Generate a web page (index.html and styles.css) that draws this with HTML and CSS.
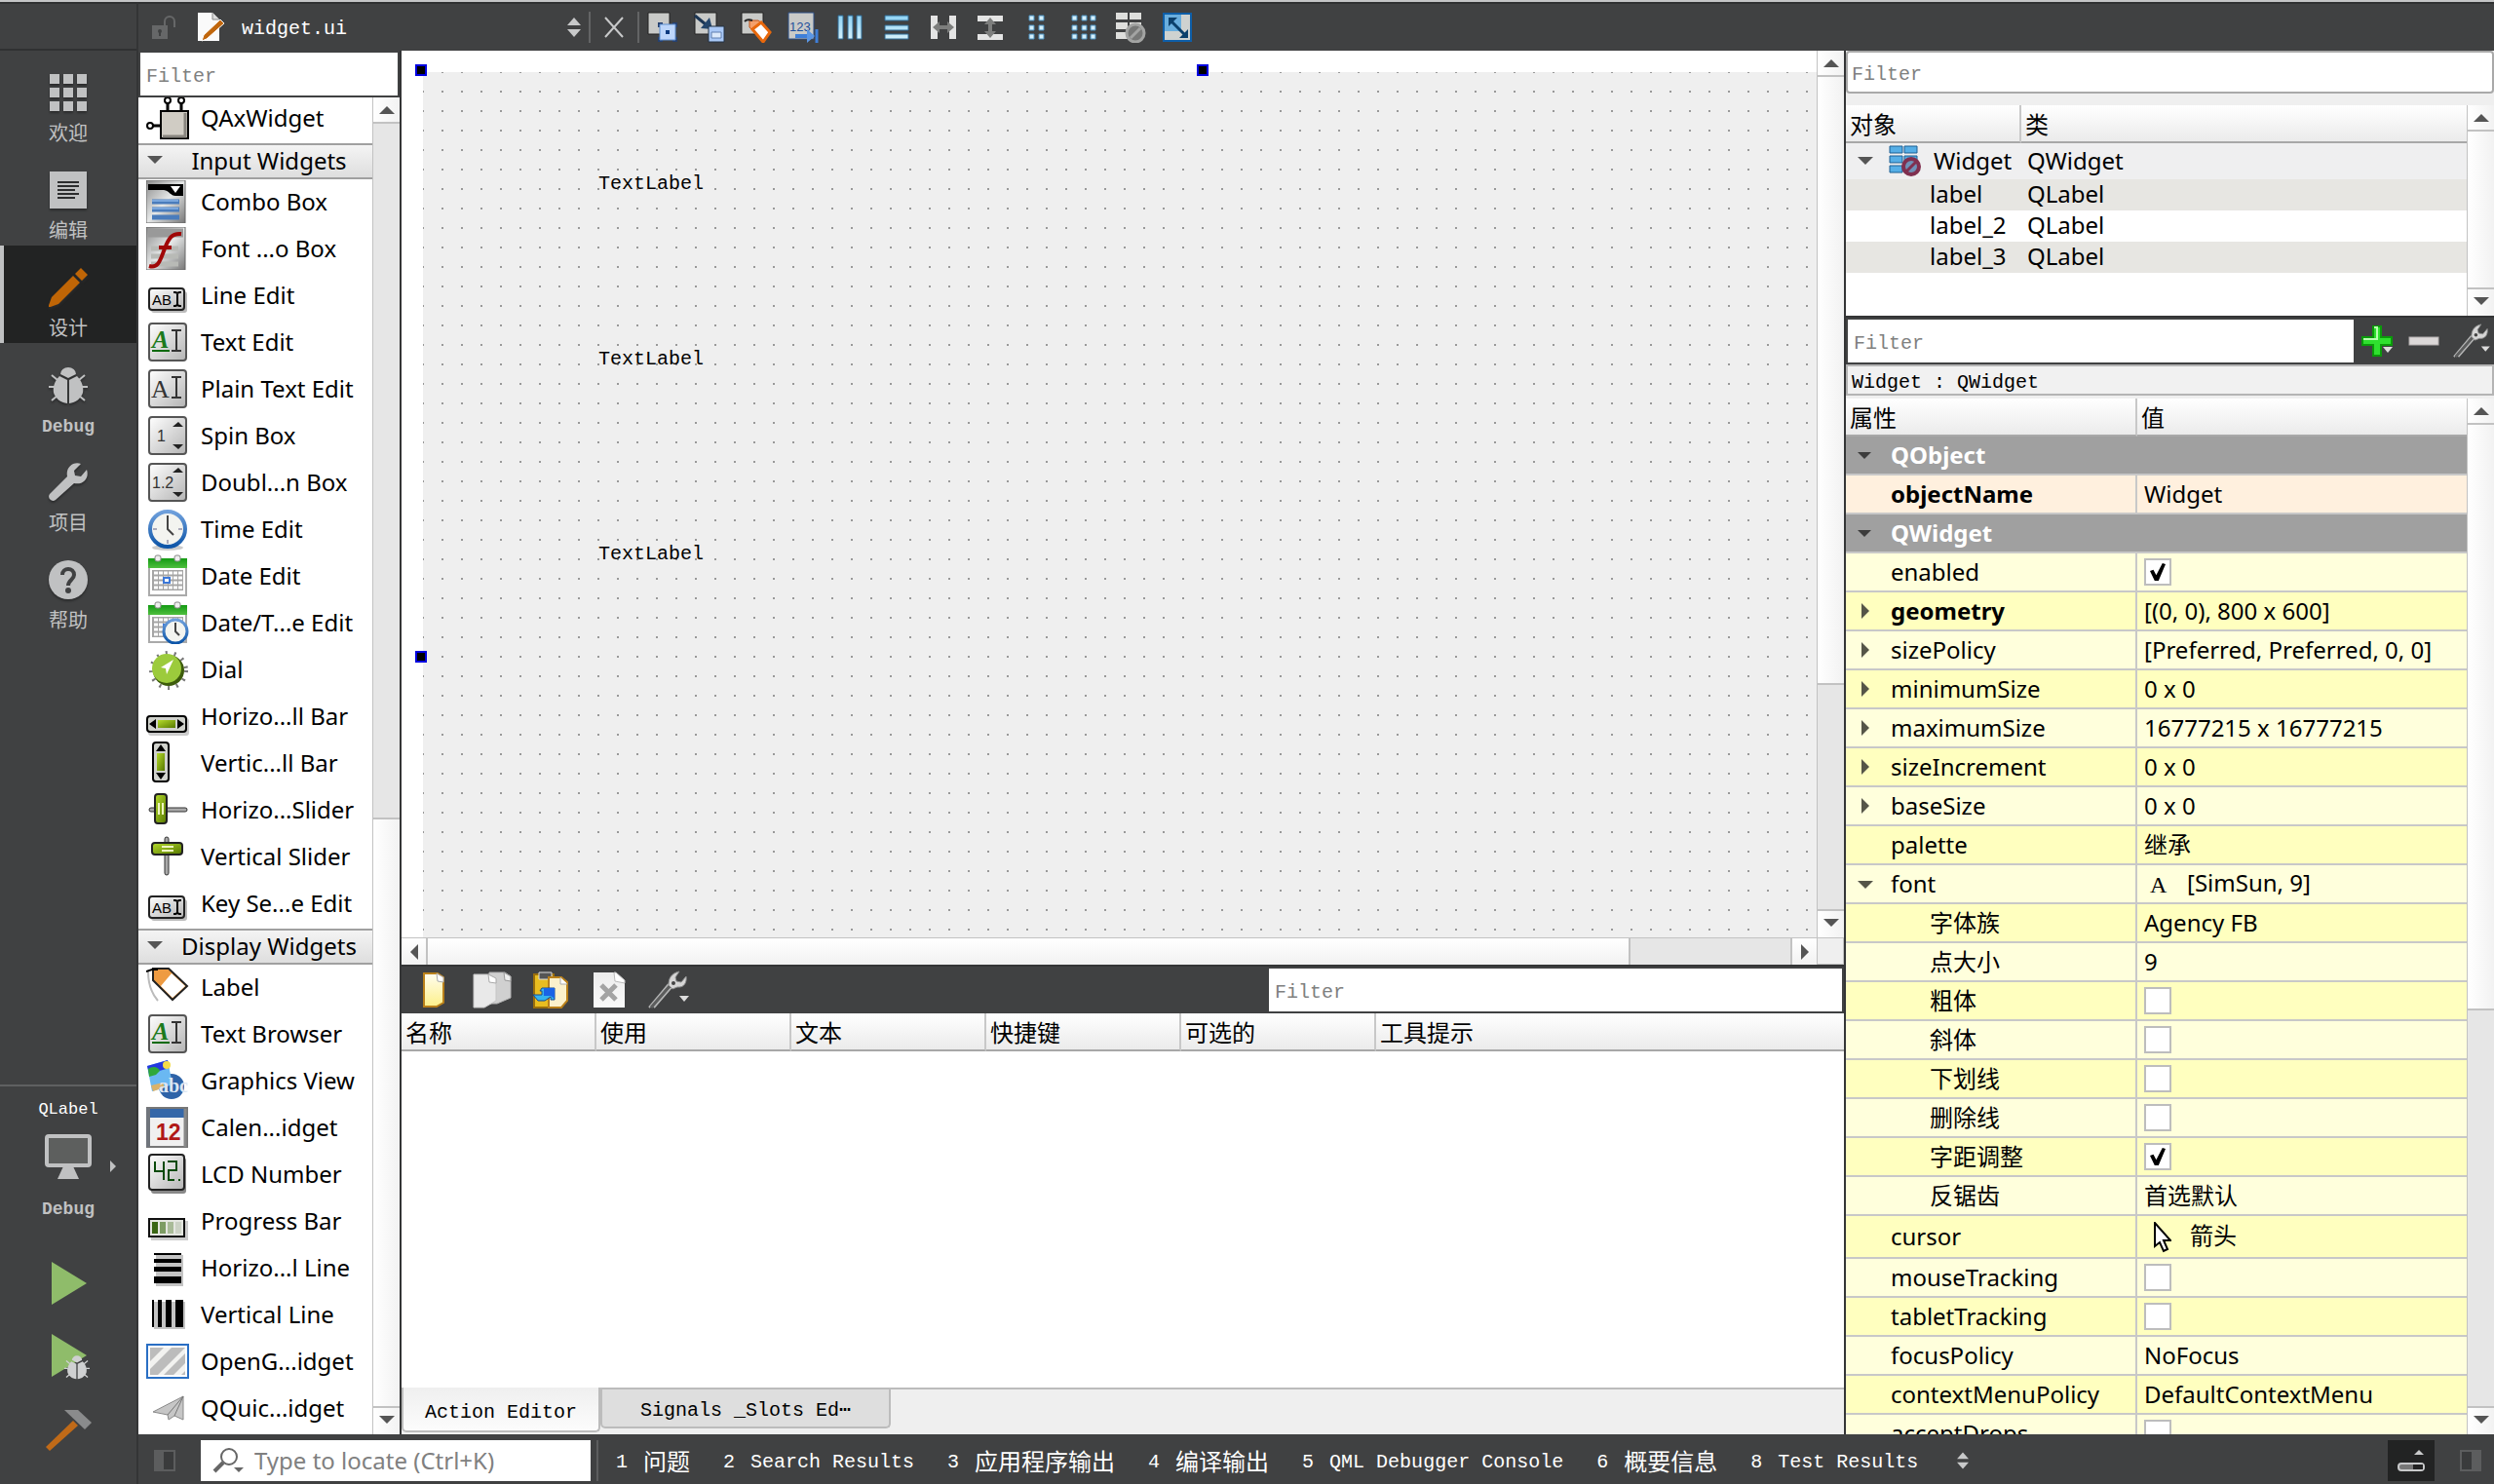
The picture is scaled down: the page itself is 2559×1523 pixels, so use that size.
FILE: index.html
```html
<!DOCTYPE html>
<html lang="zh-CN">
<head>
  <meta charset="UTF-8">
  <title>widget.ui - Qt Creator</title>
  <meta name="viewport" content="width=device-width,initial-scale=1.0">
  <link rel="stylesheet" href="styles.css">
</head>
<body class="page">

  <!-- icon sprite -->
  <svg class="sprite" width="0" height="0" aria-hidden="true">
    <defs>
      <linearGradient id="g-panel" x1="0" y1="0" x2="1" y2="1">
        <stop offset="0" stop-color="#fff"/><stop offset="1" stop-color="#b4b4b4"/>
      </linearGradient>
      <linearGradient id="g-grey" x1="0" y1="0" x2="1" y2="1">
        <stop offset="0" stop-color="#8a8a8a"/><stop offset=".5" stop-color="#e6e8e8"/><stop offset="1" stop-color="#777"/>
      </linearGradient>
      <linearGradient id="g-green" x1="0" y1="0" x2="1" y2="1">
        <stop offset="0" stop-color="#b6dc2c"/><stop offset="1" stop-color="#567800"/>
      </linearGradient>
      <linearGradient id="g-cal" x1="0" y1="0" x2="0" y2="1">
        <stop offset="0" stop-color="#139a13"/><stop offset="1" stop-color="#4fbf3f"/>
      </linearGradient>
      <linearGradient id="g-ring" x1="0" y1="0" x2="0" y2="1">
        <stop offset="0" stop-color="#6fa0dc"/><stop offset="1" stop-color="#0d55a8"/>
      </linearGradient>
      <linearGradient id="g-blue" x1="0" y1="0" x2="0" y2="1">
        <stop offset="0" stop-color="#8fd2f4"/><stop offset="1" stop-color="#d4f0fa"/>
      </linearGradient>
      <linearGradient id="g-sheet" x1="0" y1="0" x2="0" y2="1">
        <stop offset="0" stop-color="#fffdf0"/><stop offset="1" stop-color="#fdf08a"/>
      </linearGradient>
      <linearGradient id="g-page" x1="0" y1="0" x2="0" y2="1">
        <stop offset="0" stop-color="#ececec"/><stop offset="1" stop-color="#fafafa"/>
      </linearGradient>

      <symbol id="i-ax" viewBox="0 0 44 44">
        <path d="M22 4v12M36 4v12M6 30h10" stroke="#000" stroke-width="3"/>
        <g fill="#fff" stroke="#000" stroke-width="2"><circle cx="22" cy="4" r="3"/><circle cx="36" cy="4" r="3"/><circle cx="4" cy="30" r="3"/></g>
        <path d="M15 15h28v28h-28z" fill="#d0ccc4" stroke="#000" stroke-width="2"/>
        <path d="M40 17v24h-23" fill="none" stroke="#88857f" stroke-width="3"/>
      </symbol>
      <symbol id="i-combo" viewBox="0 0 44 44">
        <path d="M0 0h40v44h-40z" fill="url(#g-grey)" stroke="#666"/>
        <path d="M2 4h36v12h-8c-5 0-6-5-12-6h-16z" fill="#000"/>
        <path d="M25 6h10l-5 7z" fill="#fff"/>
        <path d="M6 22h28M6 30h28M6 38h28" stroke="#4a7cbc" stroke-width="5"/>
        <path d="M6 21h27M6 29h27" stroke="#7ba7dd" stroke-width="2"/>
      </symbol>
      <symbol id="i-font" viewBox="0 0 44 44">
        <path d="M0 0h40v44h-40z" fill="url(#g-grey)" stroke="#666"/>
        <path d="M2 6h36" stroke="#999" stroke-width="9"/>
        <path d="M5 22h28M5 30h28M5 38h28" stroke="#b8bab6" stroke-width="5"/>
        <path d="M3 40c10 3 12-8 16-18s7-16 17-15M13 21h13" fill="none" stroke="#a00808" stroke-width="4"/>
      </symbol>
      <symbol id="i-line" viewBox="0 0 44 44">
        <rect x="5" y="18" width="37" height="22" rx="3" fill="#bbb"/>
        <rect x="3" y="15" width="36" height="22" rx="3" fill="url(#g-panel)" stroke="#222" stroke-width="2"/>
        <text x="6" y="32" class="glyph glyph--abi">AB</text>
        <path d="M28 19h2l2 1 2-1h2M32 20v12M28 33h2l2-1 2 1h2" fill="none" stroke="#000" stroke-width="2"/>
      </symbol>
      <symbol id="i-rich" viewBox="0 0 44 44">
        <rect x="3" y="3" width="38" height="38" rx="3" fill="url(#g-panel)" stroke="#555" stroke-width="2"/>
        <text x="6" y="28" class="glyph glyph--green">A</text>
        <path d="M6 31h18" stroke="#0a6a0a" stroke-width="2"/>
        <path d="M26 10h10M26 31h10M31 10v21" stroke="#333" stroke-width="2"/>
      </symbol>
      <symbol id="i-plain" viewBox="0 0 44 44">
        <rect x="3" y="3" width="38" height="38" rx="3" fill="url(#g-panel)" stroke="#555" stroke-width="2"/>
        <text x="5" y="31" class="glyph">A</text>
        <path d="M26 10h10M26 31h10M31 10v21" stroke="#333" stroke-width="2"/>
      </symbol>
      <symbol id="i-spin" viewBox="0 0 44 44">
        <rect x="3" y="3" width="38" height="38" rx="3" fill="url(#g-panel)" stroke="#555" stroke-width="2"/>
        <text x="11" y="28" class="glyph glyph--small">1</text>
        <path d="M27 13h11l-5-5zM27 31h11l-5 5z" fill="#222"/>
      </symbol>
      <symbol id="i-dspin" viewBox="0 0 44 44">
        <rect x="3" y="3" width="38" height="38" rx="3" fill="url(#g-panel)" stroke="#555" stroke-width="2"/>
        <text x="6" y="28" class="glyph glyph--small">1.2</text>
        <path d="M27 12h11l-5-5zM27 32h11l-5 5z" fill="#222"/>
      </symbol>
      <symbol id="i-clock" viewBox="0 0 44 44">
        <ellipse cx="22" cy="41" rx="16" ry="3" fill="#ccc"/>
        <circle cx="22" cy="22" r="18" fill="#f3f4f0" stroke="url(#g-ring)" stroke-width="4"/>
        <path d="M22 8v14l6 6" fill="none" stroke="#444" stroke-width="2"/>
        <path d="M7 22h4M33 22h4M22 33v4" stroke="#aab" stroke-width="2"/>
      </symbol>
      <symbol id="i-date" viewBox="0 0 44 44">
        <path d="M3 5h38v37h-38z" fill="#fff" stroke="#aaa" stroke-width="2"/>
        <path d="M2 4h40v10h-40z" fill="url(#g-cal)"/>
        <rect x="9" y="1" width="6" height="6" rx="2" fill="#eee" stroke="#888"/>
        <rect x="29" y="1" width="6" height="6" rx="2" fill="#eee" stroke="#888"/>
        <path d="M6 16h32v21h-32z" fill="#a5a5a5"/>
        <path d="M8 19h29M8 24h29M8 29h29M8 34h29" stroke="#fff" stroke-width="3" stroke-dasharray="4 1"/>
        <path d="M18 24h6v5h-6z" fill="#fff" stroke="#3c78d8" stroke-width="2"/>
      </symbol>
      <symbol id="i-datetime" viewBox="0 0 44 44">
        <use href="#i-date"/>
        <circle cx="30" cy="31" r="12" fill="#f3f4f0" stroke="url(#g-ring)" stroke-width="3"/>
        <path d="M30 22v9l4 4" fill="none" stroke="#444" stroke-width="2"/>
      </symbol>
      <symbol id="i-dial" viewBox="0 0 44 44">
        <circle cx="23" cy="23" r="18" fill="none" stroke="#777" stroke-width="4" stroke-dasharray="2 7"/>
        <circle cx="23" cy="23" r="16" fill="#3d5c0c"/>
        <circle cx="21" cy="21" r="15" fill="#9ccb3c"/>
        <path d="M28 12l-13 8 5 1 1 6z" fill="#fff"/>
      </symbol>
      <symbol id="i-hbar" viewBox="0 0 44 44">
        <rect x="2" y="24" width="42" height="18" rx="3" fill="#ccc"/>
        <rect x="1" y="22" width="40" height="16" rx="3" fill="#d0d2cc" stroke="#000" stroke-width="2"/>
        <path d="M12 26h18v8h-18z" fill="url(#g-green)"/>
        <path d="M10 25v10l-7-5zM32 25v10l7-5z" fill="#000"/>
      </symbol>
      <symbol id="i-vbar" viewBox="0 0 44 44">
        <rect x="7" y="1" width="16" height="40" rx="3" fill="#d0d2cc" stroke="#000" stroke-width="2"/>
        <path d="M11 12h8v18h-8z" fill="url(#g-green)"/>
        <path d="M10 10h10l-5-7zM10 32h10l-5 7z" fill="#000"/>
      </symbol>
      <symbol id="i-hslider" viewBox="0 0 44 44">
        <rect x="3" y="20" width="39" height="4" rx="2" fill="#aaa" stroke="#333"/>
        <rect x="9" y="6" width="12" height="30" rx="3" fill="url(#g-green)" stroke="#222" stroke-width="2"/>
        <path d="M13 15v12M17 15v12" stroke="#eef5c0" stroke-width="2"/>
      </symbol>
      <symbol id="i-vslider" viewBox="0 0 44 44">
        <rect x="19" y="2" width="4" height="39" rx="2" fill="#aaa" stroke="#333"/>
        <rect x="6" y="8" width="31" height="12" rx="3" fill="url(#g-green)" stroke="#222" stroke-width="2"/>
        <path d="M16 12h12M16 16h12" stroke="#eef5c0" stroke-width="2"/>
      </symbol>
      <symbol id="i-label" viewBox="0 0 44 44">
        <path d="M2 6c0 12 3 22 10 30" fill="none" stroke="#bbb" stroke-width="2"/>
        <path d="M7 3h16l19 18-15 14-20-20z" fill="#ee9b42" stroke="#222" stroke-width="2"/>
        <path d="M26 8l14 13-13 12-12-12z" fill="#fff"/>
        <path d="M0 6l6-2h6" fill="none" stroke="#000" stroke-width="2"/>
      </symbol>
      <symbol id="i-graphics" viewBox="0 0 44 44">
        <circle cx="26" cy="28" r="13" fill="#2e63a8"/>
        <path d="M1 7l21-6 5 25-21 7z" fill="#6ab8f2"/>
        <path d="M1 7l21-6 2 8-21 6z" fill="#2438e0"/>
        <path d="M2 10c4-3 10-3 12 2l-4 4-7 2z" fill="#2fa83a"/>
        <circle cx="21" cy="6" r="4" fill="#f4dc4a"/>
        <path d="M5 27l12-3 2 5-12 4z" fill="#d9b26b"/>
        <text x="13" y="34" class="glyph glyph--abc">abc</text>
      </symbol>
      <symbol id="i-calendar" viewBox="0 0 44 44">
        <path d="M0 2h42v40h-42z" fill="#f0f0f0" stroke="#777" stroke-width="2"/>
        <path d="M0 2h4v40h-4z" fill="#70757c"/>
        <path d="M4 3h36v9h-36z" fill="#3567a8"/>
        <path d="M40 3v39" stroke="#888" stroke-width="3"/>
        <text x="10" y="35" class="glyph glyph--day">12</text>
      </symbol>
      <symbol id="i-lcd" viewBox="0 0 44 44">
        <rect x="5" y="5" width="36" height="37" rx="3" fill="#888"/>
        <rect x="3" y="2" width="36" height="36" rx="3" fill="url(#g-panel)" stroke="#222" stroke-width="2"/>
        <path d="M9 9v10h8M18 9v19M22 9h9v9h-8v10h6M33 28h2" fill="none" stroke="#0a4a0a" stroke-width="2"/>
      </symbol>
      <symbol id="i-progress" viewBox="0 0 44 44">
        <path d="M5 22h38v20h-38z" fill="#ccc"/>
        <path d="M3 20h36v18h-36z" fill="#e4e6e0" stroke="#111" stroke-width="2"/>
        <path d="M6 23h6v12h-6z" fill="#3a6614"/><path d="M14 23h6v12h-6z" fill="#7d9c63"/>
        <path d="M22 23h6v12h-6z" fill="#a9bb98"/><path d="M30 23h6v12h-6z" fill="#ccd2c5"/>
      </symbol>
      <symbol id="i-hline" viewBox="0 0 44 44">
        <path d="M10 9h28v32h-28z" fill="#c4c4c4"/>
        <path d="M8 7h28v2h-28zM8 13h28v4h-28zM8 21h28v5h-28zM8 31h28v7h-28z"/>
      </symbol>
      <symbol id="i-vline" viewBox="0 0 44 44">
        <path d="M8 9h32v28h-32z" fill="#c4c4c4"/>
        <path d="M6 7h2v28h-2zM12 7h4v28h-4zM20 7h6v28h-6zM30 7h8v28h-8z"/>
      </symbol>
      <symbol id="i-opengl" viewBox="0 0 44 44">
        <path d="M1 5h42v34h-42z" fill="#fff" stroke="#2a6fc4" stroke-width="2"/>
        <path d="M4 8h36v28h-36z" fill="#bcbcbc"/>
        <path d="M4 22l14-14h8l-22 22zM12 36l28-28v6l-22 22zM28 36l12-12v8l-4 4z" fill="#f2f2f0"/>
      </symbol>
      <symbol id="i-quick" viewBox="0 0 44 44">
        <path d="M7 26l31-16v24l-9-4-6 4-1-5z" fill="#c6c6c6" stroke="#8a8a8a"/>
        <path d="M38 10l-16 19M38 10l-9 20" stroke="#777"/>
      </symbol>

      <symbol id="i-up" viewBox="0 0 16 8"><path d="M0 8h16l-8-8z" fill="currentColor"/></symbol>
      <symbol id="i-down" viewBox="0 0 16 8"><path d="M0 0h16l-8 8z" fill="currentColor"/></symbol>
      <symbol id="i-left" viewBox="0 0 8 16"><path d="M8 0v16l-8-8z" fill="currentColor"/></symbol>
      <symbol id="i-right" viewBox="0 0 8 16"><path d="M0 0v16l8-8z" fill="currentColor"/></symbol>
      <symbol id="i-updown" viewBox="0 0 14 20"><path d="M0 8h14l-7-8zM0 12h14l-7 8z" fill="#c8c9ca"/></symbol>
      <symbol id="i-wrench" viewBox="0 0 44 40">
        <path d="M3 38l20-24M8 38l19-22" stroke="#b4b5b5" stroke-width="2"/>
        <path d="M5 38l20-23" stroke="#5c5d5d" stroke-width="3"/>
        <path d="M23 15c0-6 2-12 11-14l-4 6 1 4 5 1 5-6c1 6-2 12-9 11l-5 2z" fill="#d6d6d6" stroke="#8d8e8e"/>
        <circle cx="28" cy="13" r="2" fill="#444"/>
        <path d="M34 26h10l-5 6z" fill="#ddd"/>
      </symbol>
      <symbol id="i-bug" viewBox="0 0 40 40">
        <path d="M12 9a8 7 0 0 1 16 0l-8 4z"/>
        <path d="M19 15l-8-4c-5 5-7 11-6 17 2 6 7 10 14 11zM21 15l8-4c5 5 7 11 6 17-2 6-7 10-14 11z"/>
        <path d="M3 10l6 5M37 10l-6 5M0 22h6M40 22h-6M3 36l6-5M37 36l-6-5" stroke="currentColor" stroke-width="2"/>
      </symbol>
    </defs>
  </svg>

  <nav class="modes">
    <div class="modes__top"></div>
    <button class="mode" type="button">
      <svg class="mode__icon" viewBox="0 0 40 40"><path d="M1 1h10v10h-10zM15 1h10v10h-10zM29 1h10v10h-10zM1 15h10v10h-10zM15 15h10v10h-10zM29 15h10v10h-10zM1 29h10v10h-10zM15 29h10v10h-10zM29 29h10v10h-10z"/></svg>
      <span class="mode__label">欢迎</span>
    </button>
    <button class="mode" type="button">
      <svg class="mode__icon" viewBox="0 0 40 40"><path d="M1 1h38v38h-38z"/><path d="M9 12h22M9 16h22M9 20h18M9 24h22M9 28h18" stroke="#2c2d2e" stroke-width="2"/></svg>
      <span class="mode__label">编辑</span>
    </button>
    <button class="mode mode--active" type="button">
      <svg class="mode__icon" viewBox="0 0 40 40"><path d="M33 0l7 7-6 6-7-7zM25 8l7 7-22 22-11 4 4-11z" fill="#bf6506"/></svg>
      <span class="mode__label">设计</span>
    </button>
    <button class="mode" type="button">
      <svg class="mode__icon"><use href="#i-bug"/></svg>
      <span class="mode__label mode__label--latin">Debug</span>
    </button>
    <button class="mode" type="button">
      <svg class="mode__icon" viewBox="0 0 40 40"><path d="M33 1l-7 7 1 5 6 1 6-7c3 9-4 16-13 14l-19 17c-4 3-9-2-6-6l18-18c-2-9 6-16 14-13z"/></svg>
      <span class="mode__label">项目</span>
    </button>
    <button class="mode" type="button">
      <svg class="mode__icon" viewBox="0 0 40 40"><circle cx="20" cy="20" r="20"/><path d="M14 15c0-8 12-8 12 0 0 5-6 5-6 11" fill="none" stroke="#404142" stroke-width="4"/><circle cx="20" cy="31" r="3" fill="#404142"/></svg>
      <span class="mode__label">帮助</span>
    </button>

    <div class="kit">
      <button class="kit__selector" type="button">
        <span class="kit__project">QLabel</span>
        <svg class="kit__monitor" viewBox="0 0 48 48"><rect x="2" y="2" width="44" height="30" rx="2" fill="#5d5f5e" stroke="#c0c1c2" stroke-width="4"/><path d="M19 33h10l6 13h-22z" fill="#c0c1c2"/></svg>
        <svg class="kit__arrow" width="6" height="12"><use href="#i-right"/></svg>
        <span class="mode__label mode__label--latin">Debug</span>
      </button>
      <button class="kit__run" type="button" aria-label="Run"><svg width="48" height="48" viewBox="0 0 48 48"><path d="M7 2l36 22-36 22z" fill="#8fbc6a"/></svg></button>
      <button class="kit__run" type="button" aria-label="Debug run"><svg width="48" height="48" viewBox="0 0 48 48"><path d="M7 0l36 22-36 22z" fill="#8fbc6a"/><svg x="19" y="21" width="28" height="26" color="#cfd0d1" fill="#cfd0d1"><use href="#i-bug"/></svg></svg></button>
      <button class="kit__run" type="button" aria-label="Build"><svg width="48" height="48" viewBox="0 0 48 48"><path d="M29 13l5 5-29 26-4-4z" fill="#c06a18"/><path d="M20 2h14l14 13-7 7z" fill="#8a8b8c"/></svg></button>
    </div>
  </nav>

  <div class="main">
    <header class="toolbar">
      <button class="toolbar__btn" type="button" aria-label="Lock"><svg width="24" height="24" viewBox="0 0 24 24"><path d="M0 10h16v14h-16z" fill="#666768"/><path d="M13 11v-5a5 5 0 0 1 10 0v6" fill="none" stroke="#666768" stroke-width="2"/><circle cx="8" cy="16" r="2" fill="#404142"/><path d="M7 16h2v5h-2z" fill="#404142"/></svg></button>
      <div class="toolbar__file">
        <svg width="32" height="32" viewBox="0 0 32 32"><path d="M3 1h15l7 7v22h-22z" fill="#fafafa"/><path d="M18 1v7h7" fill="#ddd" stroke="#888"/><path d="M26 8l4 4-18 16-5 2 2-6z" fill="#c0660c" stroke="#fff"/></svg>
        <select class="toolbar__select" aria-label="Open document"><option>widget.ui</option></select>
        <svg width="14" height="20"><use href="#i-updown"/></svg>
      </div>
      <span class="toolbar__sep"></span>
      <button class="toolbar__btn" type="button" aria-label="Close"><svg width="22" height="22" viewBox="0 0 22 22"><path d="M2 1l18 20M20 1l-18 20" stroke="#c8c9ca" stroke-width="2"/></svg></button>
      <span class="toolbar__sep"></span>
      <div class="toolbar__tools">
        <button class="toolbar__btn" type="button" aria-label="Edit widgets"><svg width="32" height="32" viewBox="0 0 32 32"><path d="M1 1h22v22h-22z" fill="#c9cac8" stroke="#222"/><path d="M11 11h5v5h-5zM26 11h5v5h-5zM11 26h5v5h-5zM26 26h5v5h-5z" fill="#26406e"/><path d="M13 13h16v16h-16z" fill="#bdd6fb" stroke="#5f8fd0"/><path d="M19 19h4v4h-4z" fill="#0b3a80"/></svg></button>
        <button class="toolbar__btn" type="button" aria-label="Edit signals"><svg width="32" height="32" viewBox="0 0 32 32"><path d="M1 1h22v22h-22z" fill="#c9cac8" stroke="#222"/><path d="M1 4l11 9" stroke="#1c3654" stroke-width="3"/><path d="M16 6l3 12-12-1z" fill="#24466c"/><path d="M15 15h16v16h-16z" fill="#a9c8f6" stroke="#234"/><path d="M18 21h10v6h-10z" fill="#dbe9fb" stroke="#5f7fb0"/></svg></button>
        <button class="toolbar__btn" type="button" aria-label="Edit buddies"><svg width="32" height="32" viewBox="0 0 32 32"><path d="M1 1h22v22h-22z" fill="#c9cac8" stroke="#222"/><path d="M9 9h9l4 3-8 9-5-5z" fill="#f3a06c" stroke="#c0561c"/><path d="M21 11l9 10-7 10-11-13z" fill="#fff" stroke="#e8680c" stroke-width="3"/><path d="M4 10c2-2 5-2 8-1" fill="none" stroke="#222" stroke-width="2"/></svg></button>
        <button class="toolbar__btn" type="button" aria-label="Edit tab order"><svg width="32" height="32" viewBox="0 0 32 32"><path d="M1 1h26v27h-26z" fill="#c9cac8" stroke="#2c4f84"/><text x="2" y="20" class="glyph glyph--order">123</text><path d="M8 25h14" stroke="#3f7fd8" stroke-width="4"/><path d="M20 18l8 7-8 7z" fill="#5b96e4"/><path d="M30 18v14" stroke="#3f7fd8" stroke-width="3"/></svg></button>
        <button class="toolbar__btn" type="button" aria-label="Lay out horizontally"><svg width="32" height="32" viewBox="0 0 32 32"><path d="M4 4h5v24h-5zM14 4h5v24h-5zM23 4h5v24h-5z" fill="url(#g-blue)" stroke="#2f6a94"/></svg></button>
        <button class="toolbar__btn" type="button" aria-label="Lay out vertically"><svg width="32" height="32" viewBox="0 0 32 32"><path d="M4 4h24v5h-24zM4 14h24v5h-24zM4 23h24v5h-24z" fill="url(#g-blue)" stroke="#2f6a94"/></svg></button>
        <button class="toolbar__btn" type="button" aria-label="Horizontal splitter"><svg width="32" height="32" viewBox="0 0 32 32"><path d="M3 4h7v24h-7zM22 4h7v24h-7z" fill="#e4e4e4"/><path d="M5 16l7-6v4h8v-4l7 6-7 6v-4h-8v4z" fill="#7d7e7d"/></svg></button>
        <button class="toolbar__btn" type="button" aria-label="Vertical splitter"><svg width="32" height="32" viewBox="0 0 32 32"><path d="M3 4h26v6h-26zM3 23h26v6h-26z" fill="#e4e4e4"/><path d="M16 6l6 7h-4v7h4l-6 7-6-7h4v-7h-4z" fill="#7d7e7d"/></svg></button>
        <button class="toolbar__btn" type="button" aria-label="Form layout"><svg width="32" height="32" viewBox="0 0 32 32"><path d="M8 4h5v5h-5zM18 4h5v5h-5zM8 14h5v5h-5zM18 14h5v5h-5zM8 23h5v5h-5zM18 23h5v5h-5z" fill="#d4effb" stroke="#4a90bf"/></svg></button>
        <button class="toolbar__btn" type="button" aria-label="Grid layout"><svg width="32" height="32" viewBox="0 0 32 32"><path d="M4 4h5v5h-5zM14 4h5v5h-5zM23 4h5v5h-5zM4 14h5v5h-5zM14 14h5v5h-5zM23 14h5v5h-5zM4 23h5v5h-5zM14 23h5v5h-5zM23 23h5v5h-5z" fill="#d4effb" stroke="#4a90bf"/></svg></button>
        <button class="toolbar__btn" type="button" aria-label="Break layout"><svg width="32" height="32" viewBox="0 0 32 32"><path d="M1 1h12v7h-12zM15 1h12v7h-12zM1 11h12v7h-12zM15 11h12v7h-12zM1 21h12v7h-12z" fill="#dededc"/><circle cx="21" cy="22" r="9" fill="#777877" stroke="#a3a4a3" stroke-width="3"/><path d="M16 27l10-10" stroke="#a3a4a3" stroke-width="3"/></svg></button>
        <button class="toolbar__btn" type="button" aria-label="Adjust size"><svg width="32" height="32" viewBox="0 0 32 32"><path d="M2 2h28v28h-28z" fill="#cfd2d0" stroke="#0e5ea8" stroke-width="2"/><path d="M3 3h17v17h-17z" fill="#6aaede"/><path d="M10 10l14 14" stroke="#0b3f6b" stroke-width="3"/><path d="M7 6h9l-9 9zM27 27h-9l9-9z" fill="#0b3f6b"/></svg></button>
      </div>
    </header>

    <div class="workspace">
      <aside class="palette">
        <div class="palette__filter"><input class="field" type="text" placeholder="Filter" aria-label="Filter widgets"></div>
        <div class="palette__body">
          <div class="palette__list">
            <ul class="items"><li class="item"><svg class="item__icon"><use href="#i-ax"/></svg>QAxWidget</li></ul>
            <h2 class="group"><svg class="group__arrow" width="16" height="8"><use href="#i-down"/></svg>Input Widgets</h2>
            <ul class="items">
              <li class="item"><svg class="item__icon"><use href="#i-combo"/></svg>Combo Box</li>
              <li class="item"><svg class="item__icon"><use href="#i-font"/></svg>Font ...o Box</li>
              <li class="item"><svg class="item__icon"><use href="#i-line"/></svg>Line Edit</li>
              <li class="item"><svg class="item__icon"><use href="#i-rich"/></svg>Text Edit</li>
              <li class="item"><svg class="item__icon"><use href="#i-plain"/></svg>Plain Text Edit</li>
              <li class="item"><svg class="item__icon"><use href="#i-spin"/></svg>Spin Box</li>
              <li class="item"><svg class="item__icon"><use href="#i-dspin"/></svg>Doubl...n Box</li>
              <li class="item"><svg class="item__icon"><use href="#i-clock"/></svg>Time Edit</li>
              <li class="item"><svg class="item__icon"><use href="#i-date"/></svg>Date Edit</li>
              <li class="item"><svg class="item__icon"><use href="#i-datetime"/></svg>Date/T...e Edit</li>
              <li class="item"><svg class="item__icon"><use href="#i-dial"/></svg>Dial</li>
              <li class="item"><svg class="item__icon"><use href="#i-hbar"/></svg>Horizo...ll Bar</li>
              <li class="item"><svg class="item__icon"><use href="#i-vbar"/></svg>Vertic...ll Bar</li>
              <li class="item"><svg class="item__icon"><use href="#i-hslider"/></svg>Horizo...Slider</li>
              <li class="item"><svg class="item__icon"><use href="#i-vslider"/></svg>Vertical Slider</li>
              <li class="item"><svg class="item__icon"><use href="#i-line"/></svg>Key Se...e Edit</li>
            </ul>
            <h2 class="group"><svg class="group__arrow" width="16" height="8"><use href="#i-down"/></svg>Display Widgets</h2>
            <ul class="items">
              <li class="item"><svg class="item__icon"><use href="#i-label"/></svg>Label</li>
              <li class="item"><svg class="item__icon"><use href="#i-rich"/></svg>Text Browser</li>
              <li class="item"><svg class="item__icon"><use href="#i-graphics"/></svg>Graphics View</li>
              <li class="item"><svg class="item__icon"><use href="#i-calendar"/></svg>Calen...idget</li>
              <li class="item"><svg class="item__icon"><use href="#i-lcd"/></svg>LCD Number</li>
              <li class="item"><svg class="item__icon"><use href="#i-progress"/></svg>Progress Bar</li>
              <li class="item"><svg class="item__icon"><use href="#i-hline"/></svg>Horizo...l Line</li>
              <li class="item"><svg class="item__icon"><use href="#i-vline"/></svg>Vertical Line</li>
              <li class="item"><svg class="item__icon"><use href="#i-opengl"/></svg>OpenG...idget</li>
              <li class="item"><svg class="item__icon"><use href="#i-quick"/></svg>QQuic...idget</li>
            </ul>
          </div>
          <div class="scroll">
            <span class="scroll__btn"><svg width="16" height="8"><use href="#i-up"/></svg></span>
            <span class="scroll__groove" style="flex-grow: 714"></span>
            <span class="scroll__thumb" style="flex-grow: 603"></span>
            <span class="scroll__btn scroll__btn--end"><svg width="16" height="8"><use href="#i-down"/></svg></span>
          </div>
        </div>
      </aside>

      <div class="center">
        <section class="editor">
          <div class="editor__view">
            <div class="form">
              <span class="form__handle form__handle--tl"></span>
              <span class="form__handle form__handle--t"></span>
              <span class="form__handle form__handle--l"></span>
              <span class="form__label form__label--1">TextLabel</span>
              <span class="form__label form__label--2">TextLabel</span>
              <span class="form__label form__label--3">TextLabel</span>
            </div>
          </div>
          <div class="scroll">
            <span class="scroll__btn"><svg width="16" height="8"><use href="#i-up"/></svg></span>
            <span class="scroll__thumb" style="flex-grow: 626"></span>
            <span class="scroll__groove" style="flex-grow: 231"></span>
            <span class="scroll__btn scroll__btn--end"><svg width="16" height="8"><use href="#i-down"/></svg></span>
          </div>
          <div class="scroll scroll--horizontal">
            <span class="scroll__btn"><svg width="8" height="16"><use href="#i-left"/></svg></span>
            <span class="scroll__thumb" style="flex-grow: 1234"></span>
            <span class="scroll__groove" style="flex-grow: 164"></span>
            <span class="scroll__btn scroll__btn--end"><svg width="8" height="16"><use href="#i-right"/></svg></span>
          </div>
          <div class="editor__corner"></div>
        </section>

        <section class="actions">
          <div class="actions__bar">
            <button class="actions__btn" type="button" aria-label="New action"><svg width="40" height="40" viewBox="0 0 40 40"><path d="M10 3h14l6 4v26l-7 4h-13z" fill="url(#g-sheet)" stroke="#b9801a" stroke-width="2"/><path d="M23 3l1 8 6 1v-5z" fill="#fff" stroke="#aaa"/></svg></button>
            <button class="actions__btn" type="button" aria-label="Copy"><svg width="40" height="40" viewBox="0 0 40 40"><path d="M17 2h16l6 4v22l-14 6h-8z" fill="#d0d0d0" stroke="#b0b0b0"/><path d="M32 2l1 8 6 1v-5z" fill="#eee" stroke="#999"/><path d="M1 4h17l6 5v22l-12 7h-11z" fill="#e9e9e9" stroke="#c6c6c6"/><path d="M16 4l1 8 7 1v-5z" fill="#fff" stroke="#aaa"/></svg></button>
            <button class="actions__btn" type="button" aria-label="Paste"><svg width="40" height="40" viewBox="0 0 40 40"><path d="M3 4h20v34h-20z" fill="#e9bd20" stroke="#9a6e0c" stroke-width="2"/><path d="M8 2h13v7h-13z" fill="#555" stroke="#ddd"/><path d="M18 7h13l6 5v19l-6 7h-13z" fill="#fbf1cc" stroke="#b9801a" stroke-width="2"/><path d="M30 7v7h7" fill="#fff" stroke="#aaa"/><path d="M2 25h9v-4h-2l2-3h13v12h-4v-3l-6 4h-7z" fill="#35b4ee" stroke="#174a90"/><path d="M13 18h11v11l-4-3h-7z" fill="#1a63e6"/></svg></button>
            <button class="actions__btn" type="button" aria-label="Delete"><svg width="40" height="40" viewBox="0 0 40 40"><path d="M4 2h22l10 9v27h-32z" fill="url(#g-page)"/><path d="M25 2l1 9 10 2v-3l-9-8z" fill="#fff" stroke="#bbb"/><path d="M12 15l15 15M27 15l-15 15" stroke="#a3a3a3" stroke-width="5"/></svg></button>
            <button class="actions__btn" type="button" aria-label="Configure"><svg width="44" height="40"><use href="#i-wrench"/></svg></button>
            <input class="field actions__filter" type="text" placeholder="Filter" aria-label="Filter actions">
          </div>
          <table class="grid actions__grid">
            <thead>
              <tr><th>名称</th><th>使用</th><th>文本</th><th>快捷键</th><th>可选的</th><th class="grid__rest">工具提示</th></tr>
            </thead>
          </table>
          <div class="actions__body"></div>
          <div class="tabs">
            <button class="tab tab--active" type="button">Action Editor</button>
            <button class="tab" type="button">Signals _Slots Ed⋯</button>
          </div>
        </section>
      </div>

      <aside class="inspector">
        <div class="objects">
          <input class="field field--framed" type="text" placeholder="Filter" aria-label="Filter objects">
          <div class="objects__body">
            <table class="grid tree">
              <thead><tr><th class="tree__name">对象</th><th>类</th></tr></thead>
              <tbody>
                <tr class="tree__root">
                  <td><span class="tree__cell"><svg width="16" height="10"><use href="#i-down"/></svg><svg class="tree__icon" width="34" height="34" viewBox="0 0 34 34"><path d="M1 2h13v7h-13zM16 2h13v7h-13zM1 12h13v7h-13zM16 12h13v7h-13zM1 22h13v7h-13z" fill="#55aee6" stroke="#1d5f92"/><circle cx="23" cy="23" r="8" fill="#6f91b8" stroke="#803050" stroke-width="4"/><path d="M17 29l12-12" stroke="#803050" stroke-width="3"/></svg>Widget</span></td>
                  <td>QWidget</td>
                </tr>
                <tr class="tree__alt"><td class="tree__child">label</td><td>QLabel</td></tr>
                <tr><td class="tree__child">label_2</td><td>QLabel</td></tr>
                <tr class="tree__alt"><td class="tree__child">label_3</td><td>QLabel</td></tr>
              </tbody>
            </table>
            <div class="scroll">
              <span class="scroll__btn"><svg width="16" height="8"><use href="#i-up"/></svg></span>
              <span class="scroll__thumb"></span>
              <span class="scroll__btn scroll__btn--end"><svg width="16" height="8"><use href="#i-down"/></svg></span>
            </div>
          </div>
        </div>

        <div class="props">
          <div class="props__bar">
            <input class="field" type="text" placeholder="Filter" aria-label="Filter properties">
            <button class="props__btn" type="button" aria-label="Add property"><svg width="32" height="32" viewBox="0 0 32 32"><path d="M12 1h8v11h11v8h-11v11h-8v-11h-11v-8h11z" fill="#2fe02f" stroke="#0a9a0a" stroke-width="2"/><path d="M13 2h3v12h-14" fill="none" stroke="#b8ffb0" stroke-width="2"/><path d="M22 22h10l-5 6z" fill="#ddd"/></svg></button>
            <button class="props__btn" type="button" aria-label="Remove property"><svg width="32" height="10"><rect x="1" y="1" width="30" height="8" fill="#dcd8d8" stroke="#b0acac"/></svg></button>
            <button class="props__btn" type="button" aria-label="Configure"><svg width="40" height="36"><use href="#i-wrench"/></svg></button>
          </div>
          <p class="props__title">Widget : QWidget</p>
          <div class="props__body">
            <div class="props__view">
              <table class="grid sheet">
                <thead><tr><th class="sheet__name">属性</th><th>值</th></tr></thead>
                <tbody>
                  <tr class="sheet__group"><th colspan="2"><svg class="sheet__arrow sheet__arrow--open" width="14" height="7"><use href="#i-down"/></svg>QObject</th></tr>
                  <tr class="sheet__peach"><td><b>objectName</b></td><td>Widget</td></tr>
                  <tr class="sheet__group"><th colspan="2"><svg class="sheet__arrow sheet__arrow--open" width="14" height="7"><use href="#i-down"/></svg>QWidget</th></tr>
                  <tr><td><label for="p-enabled">enabled</label></td><td><input class="check" id="p-enabled" type="checkbox" checked></td></tr>
                  <tr class="sheet__dark"><td><svg class="sheet__arrow" width="8" height="16"><use href="#i-right"/></svg><b>geometry</b></td><td>[(0, 0), 800 x 600]</td></tr>
                  <tr><td><svg class="sheet__arrow" width="8" height="16"><use href="#i-right"/></svg>sizePolicy</td><td>[Preferred, Preferred, 0, 0]</td></tr>
                  <tr class="sheet__dark"><td><svg class="sheet__arrow" width="8" height="16"><use href="#i-right"/></svg>minimumSize</td><td>0 x 0</td></tr>
                  <tr><td><svg class="sheet__arrow" width="8" height="16"><use href="#i-right"/></svg>maximumSize</td><td>16777215 x 16777215</td></tr>
                  <tr class="sheet__dark"><td><svg class="sheet__arrow" width="8" height="16"><use href="#i-right"/></svg>sizeIncrement</td><td>0 x 0</td></tr>
                  <tr><td><svg class="sheet__arrow" width="8" height="16"><use href="#i-right"/></svg>baseSize</td><td>0 x 0</td></tr>
                  <tr class="sheet__dark"><td>palette</td><td>继承</td></tr>
                  <tr><td><svg class="sheet__arrow sheet__arrow--open" width="16" height="8"><use href="#i-down"/></svg>font</td><td><span class="sheet__preview sheet__preview--font">A</span>[SimSun, 9]</td></tr>
                  <tr class="sheet__dark"><td class="sheet__sub">字体族</td><td>Agency FB</td></tr>
                  <tr><td class="sheet__sub">点大小</td><td>9</td></tr>
                  <tr class="sheet__dark"><td class="sheet__sub"><label for="p-bold">粗体</label></td><td><input class="check" id="p-bold" type="checkbox"></td></tr>
                  <tr><td class="sheet__sub"><label for="p-italic">斜体</label></td><td><input class="check" id="p-italic" type="checkbox"></td></tr>
                  <tr class="sheet__dark"><td class="sheet__sub"><label for="p-underline">下划线</label></td><td><input class="check" id="p-underline" type="checkbox"></td></tr>
                  <tr><td class="sheet__sub"><label for="p-strike">删除线</label></td><td><input class="check" id="p-strike" type="checkbox"></td></tr>
                  <tr class="sheet__dark"><td class="sheet__sub"><label for="p-kerning">字距调整</label></td><td><input class="check" id="p-kerning" type="checkbox" checked></td></tr>
                  <tr><td class="sheet__sub">反锯齿</td><td>首选默认</td></tr>
                  <tr class="sheet__dark sheet__tall"><td>cursor</td><td><span class="sheet__preview"><svg width="18" height="32" viewBox="0 0 18 32"><path d="M1 1v24l5-4 4 9 4-2-4-9h7z" fill="#fff" stroke="#000" stroke-width="2"/></svg></span>箭头</td></tr>
                  <tr><td><label for="p-mouse">mouseTracking</label></td><td><input class="check" id="p-mouse" type="checkbox"></td></tr>
                  <tr class="sheet__dark"><td><label for="p-tablet">tabletTracking</label></td><td><input class="check" id="p-tablet" type="checkbox"></td></tr>
                  <tr><td>focusPolicy</td><td>NoFocus</td></tr>
                  <tr class="sheet__dark"><td>contextMenuPolicy</td><td>DefaultContextMenu</td></tr>
                  <tr><td><label for="p-drops">acceptDrops</label></td><td><input class="check" id="p-drops" type="checkbox"></td></tr>
                </tbody>
              </table>
            </div>
            <div class="scroll">
              <span class="scroll__btn"><svg width="16" height="8"><use href="#i-up"/></svg></span>
              <span class="scroll__thumb" style="flex-grow: 601"></span>
              <span class="scroll__groove" style="flex-grow: 408"></span>
              <span class="scroll__btn scroll__btn--end"><svg width="16" height="8"><use href="#i-down"/></svg></span>
            </div>
          </div>
        </div>
      </aside>
    </div>

    <footer class="status">
      <button class="status__toggle" type="button" aria-label="Toggle left sidebar"><svg width="22" height="22" viewBox="0 0 22 22"><path d="M1 1h20v20h-20z" fill="#3a3b3c" stroke="#5c5d5e" stroke-width="2"/><path d="M0 0h10v22h-10z" fill="#5c5d5e"/></svg></button>
      <div class="locator">
        <svg width="32" height="26" viewBox="0 0 32 26"><circle cx="17" cy="9" r="8" fill="none" stroke="#666" stroke-width="2"/><path d="M11 15l-9 9" stroke="#666" stroke-width="4"/><path d="M22 20h10l-5 5z" fill="#666"/></svg>
        <input class="locator__input" type="text" placeholder="Type to locate (Ctrl+K)" aria-label="Locate">
      </div>
      <span class="status__sep"></span>
      <button class="pane" type="button"><span>1</span><span class="pane__cjk">问题</span></button>
      <button class="pane" type="button"><span>2</span><span>Search Results</span></button>
      <button class="pane" type="button"><span>3</span><span class="pane__cjk">应用程序输出</span></button>
      <button class="pane" type="button"><span>4</span><span class="pane__cjk">编译输出</span></button>
      <button class="pane" type="button"><span>5</span><span>QML Debugger Console</span></button>
      <button class="pane" type="button"><span>6</span><span class="pane__cjk">概要信息</span></button>
      <button class="pane" type="button"><span>8</span><span>Test Results</span></button>
      <button class="status__more" type="button" aria-label="More panes"><svg width="12" height="20"><use href="#i-updown"/></svg></button>
      <button class="status__output" type="button" aria-label="Toggle output pane"><svg width="30" height="26" viewBox="0 0 30 26"><path d="M18 7h10l-5-5z" fill="#c8c9ca"/><rect x="2" y="16" width="26" height="7" rx="3" fill="#777" stroke="#c8c9ca" stroke-width="2"/><path d="M17 17h10v5h-10z" fill="#222"/></svg></button>
      <button class="status__toggle status__toggle--right" type="button" aria-label="Toggle right sidebar"><svg width="22" height="22" viewBox="0 0 22 22"><path d="M1 1h20v20h-20z" fill="#3a3b3c" stroke="#5c5d5e" stroke-width="2"/><path d="M12 0h10v22h-10z" fill="#5c5d5e"/></svg></button>
    </footer>
  </div>
</body>
</html>
```

FILE: styles.css
```css
*, *::before, *::after {
  box-sizing: border-box;
}

.page {
  margin: 0;
  height: 100vh;
  display: flex;
  overflow: hidden;
  border-top: 2px solid #c4c5c6;
  background: #404142;
  font-family: "Noto Sans", "Noto Sans CJK SC", sans-serif;
  font-size: 24px;
  line-height: 32px;
  color: #000;
}

.sprite {
  position: absolute;
}

svg {
  display: block;
  flex: none;
}

button, input, select {
  font: inherit;
  color: inherit;
  border: 0;
  border-radius: 0;
  padding: 0;
  margin: 0;
  background: none;
}

button {
  display: flex;
  align-items: center;
  justify-content: center;
}

/* text inside icons */
.glyph {
  font-family: "Liberation Serif", serif;
  font-size: 26px;
  fill: #333;
}

.glyph--green {
  font-weight: bold;
  font-style: italic;
  fill: #1c7a1c;
}

.glyph--abi {
  font-family: "Liberation Sans", sans-serif;
  font-size: 15px;
  fill: #000;
}

.glyph--small {
  font-family: "Liberation Sans", sans-serif;
  font-size: 16px;
}

.glyph--abc {
  font-size: 20px;
  font-weight: bold;
  fill: #dde6f2;
}

.glyph--day {
  font-family: "Liberation Sans", sans-serif;
  font-size: 23px;
  font-weight: bold;
  fill: #b01818;
}

.glyph--order {
  font-family: "Liberation Sans", sans-serif;
  font-size: 13px;
  fill: #1e4f9a;
}

/* mode selector */
.modes {
  flex: none;
  width: 142px;
  display: flex;
  flex-direction: column;
  border-top: 2px solid #303132;
  border-right: 2px solid #343536;
}

.modes__top {
  height: 48px;
  border-bottom: 2px solid #303132;
}

.mode {
  height: 100px;
  flex-direction: column;
  justify-content: flex-start;
  padding-top: 23px;
  color: #c0c1c2;
  fill: #c0c1c2;
}

.mode--active {
  background: #222323;
  border-left: 4px solid #c0c1c2;
  padding-right: 4px;
}

.mode__icon {
  width: 40px;
  height: 40px;
  filter: drop-shadow(0 2px 1px #2a2b2c);
}

.mode__label {
  margin-top: 5px;
  font-family: "Noto Sans CJK SC", sans-serif;
  font-size: 20px;
  line-height: 32px;
}

.mode__label--latin {
  margin-top: 7px;
  font-family: "Liberation Mono", monospace;
  font-size: 18px;
  font-weight: bold;
}

.kit {
  margin-top: auto;
  padding-bottom: 16px;
  border-top: 2px solid #5f6061;
  display: flex;
  flex-direction: column;
}

.kit__selector {
  position: relative;
  height: 164px;
  flex-direction: column;
  justify-content: flex-start;
  padding-top: 8px;
  color: #c0c1c2;
}

.kit__project {
  font-family: "Liberation Mono", monospace;
  font-size: 17px;
  color: #fff;
}

.kit__monitor {
  width: 48px;
  height: 48px;
  margin: 9px 0 6px;
}

.kit__arrow {
  position: absolute;
  left: 113px;
  top: 76px;
}

.kit__run {
  height: 76px;
}

/* main column */
.main {
  flex: 1;
  min-width: 0;
  display: flex;
  flex-direction: column;
  border-top: 2px solid #303132;
}

.toolbar {
  flex: none;
  height: 48px;
  padding-left: 2px;
  display: flex;
  align-items: center;
}

.toolbar__btn {
  width: 48px;
  height: 48px;
}

.toolbar__file {
  width: 412px;
  display: flex;
  align-items: center;
  padding: 0 8px;
  gap: 16px;
}

.toolbar__select {
  flex: 1;
  appearance: none;
  padding-top: 4px;
  font-family: "Liberation Mono", monospace;
  font-size: 20px;
  color: #fff;
}

.toolbar__sep {
  width: 2px;
  height: 32px;
  background: #636465;
}

.toolbar__tools {
  display: flex;
}

.workspace {
  flex: 1;
  min-height: 0;
  display: flex;
}

.field {
  width: 100%;
  height: 44px;
  padding: 4px 6px 0;
  background: #fff;
  font-family: "Liberation Mono", monospace;
  font-size: 20px;
}

.field::placeholder, .locator__input::placeholder {
  color: #808080;
  opacity: 1;
}

.field--framed {
  padding: 4px 4px 0;
  border: 2px solid #a9a9a9;
  border-radius: 4px;
}

/* scroll bars */
.scroll {
  flex: none;
  width: 28px;
  display: flex;
  flex-direction: column;
  color: #555;
  background: #fff;
  border-left: 1px solid #c2c2c2;
}

.scroll__btn {
  flex: none;
  height: 27px;
  display: flex;
  align-items: center;
  justify-content: center;
  background: linear-gradient(to right, #fff, #f2f2f2);
  border-bottom: 2px solid #c2c2c2;
}

.scroll__btn--end {
  height: 29px;
  padding-bottom: 3px;
  border-bottom: 0;
  border-top: 2px solid #c2c2c2;
}

.scroll__thumb {
  flex: 1 0 0;
  background: linear-gradient(to right, #fff, #f2f2f2);
}

.scroll__groove {
  flex: 1 0 0;
  background: #e6e6e6;
}

.scroll__groove + .scroll__thumb {
  border-top: 2px solid #c2c2c2;
}

.scroll__thumb + .scroll__groove {
  border-top: 2px solid #c2c2c2;
}

.scroll--horizontal {
  width: auto;
  height: 28px;
  flex-direction: row;
  border-left: 0;
  border-top: 1px solid #c2c2c2;
}

.scroll--horizontal .scroll__btn {
  width: 27px;
  height: auto;
  padding: 0;
  border: 0;
  border-right: 2px solid #c2c2c2;
  background: linear-gradient(#fff, #f2f2f2);
}

.scroll--horizontal .scroll__btn--end {
  border-right: 0;
  border-left: 2px solid #c2c2c2;
}

.scroll--horizontal .scroll__thumb {
  background: linear-gradient(#fff, #f2f2f2);
}

.scroll--horizontal .scroll__groove {
  border-top: 0;
  border-left: 2px solid #c2c2c2;
}

/* widget palette */
.palette {
  flex: none;
  width: 270px;
  display: flex;
  flex-direction: column;
  border-right: 2px solid #343536;
}

.palette__filter {
  padding: 2px;
}

.palette__body {
  flex: 1;
  min-height: 0;
  display: flex;
  background: #fff;
}

.palette__list {
  flex: 1;
  overflow: hidden;
}

.items {
  list-style: none;
  margin: 0;
  padding: 0;
}

.items:first-child {
  margin-top: -2px;
}

.item {
  height: 48px;
  padding: 0 0 2px 8px;
  display: flex;
  align-items: center;
  gap: 12px;
  white-space: nowrap;
}

.item__icon {
  width: 44px;
  height: 44px;
}

.group {
  position: relative;
  height: 37px;
  margin: 1px 0 0;
  padding-left: 28px;
  border-top: 2px solid #a0a0a0;
  border-bottom: 2px solid #a0a0a0;
  background: linear-gradient(#f4f4f4, #dedede);
  font-size: 24px;
  font-weight: normal;
  text-align: center;
}

.group__arrow {
  position: absolute;
  left: 9px;
  top: 11px;
  color: #555;
}

/* form editor */
.center {
  flex: 1;
  min-width: 0;
  display: flex;
  flex-direction: column;
}

.editor {
  flex: 1;
  min-height: 0;
  display: grid;
  grid-template: 1fr 28px / 1fr 28px;
  background: #efefef;
}

.editor__view {
  background: #fff;
  padding: 22px 0 0 22px;
}

.form {
  position: relative;
  height: 100%;
  background: conic-gradient(from 270deg at 2px 2px, #999 90deg, #efefef 0) -1px -1px / 20px 20px;
}

.form__handle {
  position: absolute;
  width: 12px;
  height: 12px;
  background: #000;
  border: 2px solid #0000e0;
}

.form__handle--tl {
  left: -8px;
  top: -8px;
}

.form__handle--t {
  left: 794px;
  top: -8px;
}

.form__handle--l {
  left: -8px;
  top: 594px;
}

.form__label {
  position: absolute;
  left: 180px;
  font-family: "Liberation Mono", monospace;
  font-size: 20px;
}

.form__label--1 {
  top: 99px;
}

.form__label--2 {
  top: 279px;
}

.form__label--3 {
  top: 479px;
}

.editor__corner {
  border: 1px solid #c2c2c2;
}

/* action editor */
.actions {
  flex: none;
  height: 482px;
  display: flex;
  flex-direction: column;
  border-top: 2px solid #343536;
  background: #fff;
}

.actions__bar {
  flex: none;
  height: 48px;
  padding-right: 2px;
  display: flex;
  align-items: center;
  background: #404142;
}

.actions__btn {
  width: 60px;
  height: 48px;
  padding-left: 6px;
}

.actions__filter {
  width: 588px;
  margin-left: auto;
}

.grid {
  width: 100%;
  border-collapse: separate;
  border-spacing: 0;
  table-layout: fixed;
}

.grid td, .grid th {
  padding: 0;
  text-align: left;
  white-space: nowrap;
}

.grid thead th {
  height: 39px;
  padding: 2px 0 0 4px;
  background: linear-gradient(#fff, #ebebeb);
  border-right: 2px solid #c8c8c8;
  border-bottom: 2px solid #a8a8a8;
  font-weight: normal;
}

.grid thead th:last-child {
  border-right: 0;
}

.actions__grid th {
  width: 200px;
}

.actions__grid .grid__rest {
  width: auto;
}

.actions__body {
  flex: 1;
}

.tabs {
  height: 48px;
  display: flex;
  align-items: flex-start;
  background: #efefef;
  border-top: 2px solid #bcbcbc;
}

.tab {
  height: 40px;
  padding: 6px 39px 0;
  background: #dedede;
  border: 2px solid #bcbcbc;
  border-top: 0;
  border-radius: 0 0 5px 5px;
  font-family: "Liberation Mono", monospace;
  font-size: 20px;
}

.tab--active {
  height: 46px;
  margin-top: -2px;
  padding: 8px 22px 0;
  background: linear-gradient(#efefef, #fcfcfc);
}

/* object inspector */
.inspector {
  flex: none;
  width: 667px;
  display: flex;
  flex-direction: column;
  border-left: 2px solid #343536;
  background: #efefef;
}

.objects {
  flex: none;
  display: flex;
  flex-direction: column;
  border-bottom: 2px solid #343536;
}

.objects__body {
  height: 216px;
  margin-top: 12px;
  display: flex;
  align-items: flex-start;
  background: #fff;
}

.objects__body .scroll {
  align-self: stretch;
}

.tree {
  flex: 1;
}

.tree__name {
  width: 180px;
}

.tree td {
  height: 32px;
  padding: 0 0 2px 6px;
  line-height: 30px;
}

.tree .tree__child {
  padding-left: 86px;
}

.tree__root td {
  height: 37px;
  background: #efeff0;
}

.tree__alt td {
  background: #e7e6e2;
}

.tree__cell {
  display: flex;
  align-items: center;
  padding-left: 6px;
}

.tree__cell > svg:first-child {
  color: #555;
}

.tree__icon {
  margin: 0 12px 0 16px;
}

/* property editor */
.props {
  flex: 1;
  min-height: 0;
  display: flex;
  flex-direction: column;
}

.props__bar {
  flex: none;
  height: 48px;
  padding: 0 0 0 2px;
  display: flex;
  align-items: center;
  background: #404142;
}

.props__bar .field {
  flex: 1;
}

.props__btn {
  width: 48px;
  height: 44px;
}

.props__title {
  flex: none;
  height: 32px;
  margin: 0 0 3px;
  padding: 1px 4px 0;
  background: #f1f1f1;
  border: 2px solid #b4b4b4;
  font-family: "Liberation Mono", monospace;
  font-size: 20px;
}

.props__body {
  flex: 1;
  min-height: 0;
  display: flex;
}

.props__view {
  flex: 1;
  overflow: hidden;
  background: #ffffdc;
}

.sheet__name {
  width: 299px;
}

.sheet td, .sheet__group th {
  position: relative;
  height: 40px;
  background: #ffffdc;
  border-bottom: 2px solid #c8c8c8;
}

.sheet td:first-child, .sheet__group th {
  padding-left: 46px;
  border-right: 2px solid #c8c8c8;
}

.sheet td:last-child {
  padding-left: 7px;
}

.sheet .sheet__sub:first-child {
  padding-left: 86px;
}

.sheet__dark td {
  background: #ffffbf;
}

.sheet__peach td {
  background: #fff0de;
}

.sheet__group th {
  background: #a0a0a0;
  border-right: 0;
  color: #fff;
}

.sheet__tall td {
  height: 44px;
}

.sheet__arrow {
  position: absolute;
  left: 16px;
  top: 11px;
  color: #555548;
}

.sheet__arrow--open {
  left: 12px;
  top: 16px;
}

.sheet__group .sheet__arrow {
  color: #3c3c3c;
}

.sheet__preview {
  display: inline-flex;
  width: 47px;
  padding-left: 10px;
  vertical-align: middle;
}

.sheet__preview--font {
  width: 44px;
  padding-left: 6px;
  font-family: "Liberation Serif", serif;
}

.check {
  display: block;
  appearance: none;
  width: 28px;
  height: 28px;
  background: #fff;
  border: 2px solid #bdbdbd;
}

.check:checked::before {
  content: "";
  display: block;
  width: 16px;
  height: 18px;
  margin: 3px 4px;
  background: #000;
  clip-path: polygon(0 45%, 22% 38%, 40% 68%, 80% 0, 100% 5%, 55% 100%, 30% 100%);
}

/* status bar */
.status {
  flex: none;
  height: 51px;
  padding-top: 3px;
  display: flex;
  align-items: center;
  color: #fff;
}

.status__toggle {
  width: 64px;
  height: 42px;
  padding-right: 10px;
}

.status__toggle--right {
  width: 61px;
  padding: 0 0 0 12px;
}

.locator {
  width: 400px;
  height: 42px;
  padding-left: 12px;
  display: flex;
  align-items: center;
  gap: 11px;
  background: #fff;
}

.locator__input {
  flex: 1;
  min-width: 0;
  color: #000;
}

.status__sep {
  width: 2px;
  height: 42px;
  margin: 0 18px 0 6px;
  background: #5c5d5e;
}

.pane {
  margin-right: 34px;
  padding-top: 4px;
  gap: 16px;
  font-family: "Liberation Mono", monospace;
  font-size: 20px;
  white-space: nowrap;
}

.pane__cjk {
  padding-bottom: 4px;
  font-family: "Noto Sans CJK SC", sans-serif;
  font-size: 24px;
}

.status__more {
  margin-left: 6px;
}

.status__output {
  width: 48px;
  height: 42px;
  margin-left: auto;
  background: #222323;
}
```
